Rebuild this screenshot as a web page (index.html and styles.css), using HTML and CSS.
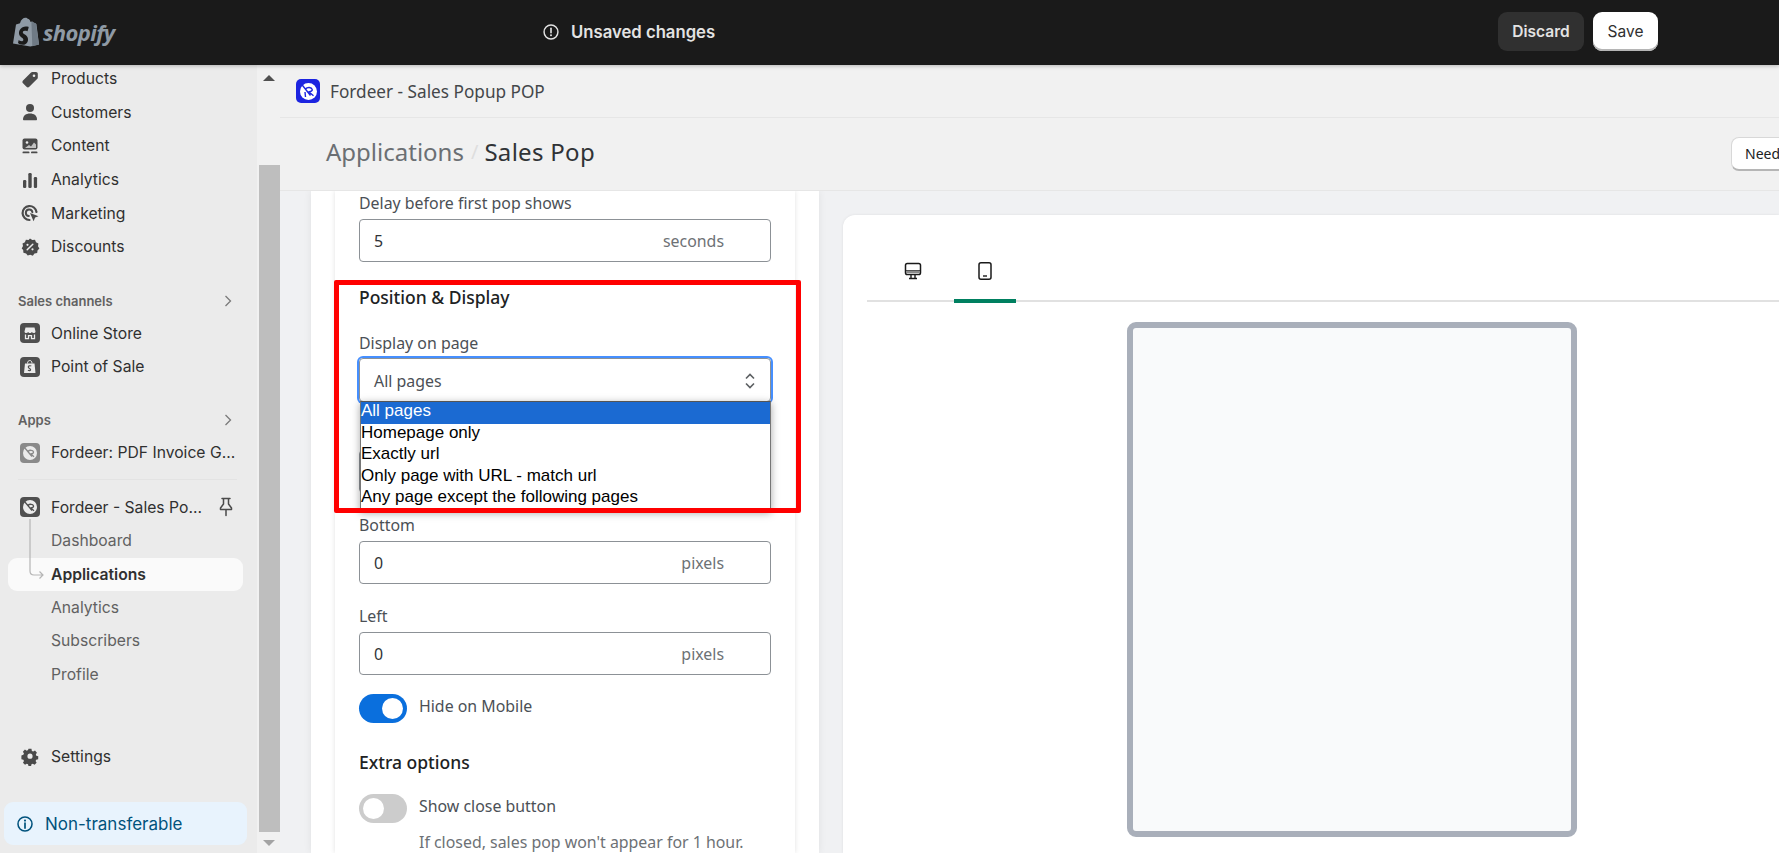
FILE: index.html
```html
<!DOCTYPE html>
<html lang="en">
    <head>
        <meta charset="utf-8">
        <meta name="viewport" content="width=device-width, initial-scale=1.0">
        <title>Fordeer - Sales Popup POP</title>
        <link rel="stylesheet" href="styles.css">
    </head>
    <body>
        <header class="topbar">
            <div class="brand">
                <svg class="brand_bag" viewBox="0 0 26 30" width="26" height="30"><path d="M3 7.500 7 6.200C8 2.800 10 .8 12.600.8c1 0 1.600.4 2 1 1.500 0 2.600 1.300 3 3.300l1.800-.5 1 .9 3 1.400L26 27.500 17.300 29.500 0 26.500z" fill="#8f9aa5"/><path d="M18.400 4.600 19.300 29.200 26 27.600 23 6.500z" fill="#6f7a85"/><path d="M15.600 10.800 14.500 14.200s-1.200-.6-2.600-.5c-2.100.1-2.100 1.400-2.100 1.700.1 1.800 4.900 2.200 5.200 6.500.2 3.300-1.800 5.600-4.700 5.800-3.400.2-5.300-1.800-5.300-1.800l.7-3s1.900 1.400 3.400 1.300c1-.1 1.300-.9 1.300-1.400-.1-2.400-4.100-2.300-4.400-6.200-.2-3.300 2-6.700 6.800-7 1.900-.1 2.800.4 2.800.4z" fill="#1a1a1a"/></svg>
                <span class="brand_name">shopify</span>
            </div>
            <div class="unsaved">
                <svg viewBox="0 0 20 20" width="18" height="18"><circle cx="10" cy="10" r="7.700" fill="none" stroke="#e3e3e3" stroke-width="1.600"/><path d="M10 5.800v5" stroke="#e3e3e3" stroke-width="1.800" stroke-linecap="round"/><circle cx="10" cy="13.700" r="1.100" fill="#e3e3e3"/></svg>
                <span>Unsaved changes</span>
            </div>
            <div class="top_actions">
                <button type="button" class="btn_discard">Discard</button>
                <button type="button" class="btn_save">Save</button>
            </div>
        </header>

        <div class="frame">
            <nav class="sidebar">
                <div class="nav_group">
                    <a class="nav_row"><svg class="ico" viewBox="0 0 20 20"><path d="M3 11.500 10.800 3.700c.4-.4 1-.7 1.600-.7H16c1 0 1.800.8 1.800 1.800v3.600c0 .6-.2 1.200-.7 1.600L9.300 17.800c-.8.8-2 .8-2.800 0L3 14.300c-.8-.8-.8-2 0-2.800z" fill="#4a4a4a"/><circle cx="14" cy="6.800" r="1.300" fill="#ebebeb"/></svg>Products</a>
                    <a class="nav_row"><svg class="ico" viewBox="0 0 20 20"><circle cx="10" cy="6" r="4" fill="#4a4a4a"/><path d="M3 17.500c0-4 3-6 7-6s7 2 7 6c0 .4-.3.7-.7.7H3.700c-.4 0-.7-.3-.7-.7z" fill="#4a4a4a"/></svg>Customers</a>
                    <a class="nav_row"><svg class="ico" viewBox="0 0 20 20"><rect x="2.500" y="2.500" width="15" height="11" rx="2" fill="#4a4a4a"/><circle cx="7" cy="6.500" r="1.300" fill="#ebebeb"/><path d="M5 12l4-3 2 1.500 3-4 2 2v3.500z" fill="#ebebeb" opacity=".75"/><rect x="2.500" y="15.500" width="7" height="1.800" rx=".9" fill="#4a4a4a"/><rect x="11" y="15.500" width="6.500" height="1.800" rx=".9" fill="#4a4a4a"/></svg>Content</a>
                    <a class="nav_row"><svg class="ico" viewBox="0 0 20 20"><rect x="3" y="10" width="3.300" height="8" rx="1.200" fill="#4a4a4a"/><rect x="8.300" y="3" width="3.400" height="15" rx="1.200" fill="#4a4a4a"/><rect x="13.800" y="7" width="3.300" height="11" rx="1.200" fill="#4a4a4a"/></svg>Analytics</a>
                    <a class="nav_row"><svg class="ico" viewBox="0 0 20 20"><path d="M9.500 17a7 7 0 1 1 7-8" fill="none" stroke="#4a4a4a" stroke-width="2.200" stroke-linecap="round"/><path d="M8.800 13a3.300 3.300 0 1 1 3.600-3.800" fill="none" stroke="#4a4a4a" stroke-width="2" stroke-linecap="round"/><path d="M10 10l8.500 3.200-3.400 1.400-1.500 3.700z" fill="#4a4a4a"/></svg>Marketing</a>
                    <a class="nav_row"><svg class="ico" viewBox="0 0 20 20"><path d="M10 1.500l2.300 1.500 2.700-.3 1 2.500 2.400 1.300-.4 2.700 1.400 2.300-1.900 1.900-.3 2.700-2.700.5-1.700 2.100-2.500-1-2.600.9-1.600-2.200-2.700-.6-.2-2.700L1.700 11.500l1.300-2.400-.5-2.700 2.400-1.200 1-2.500 2.700.2z" fill="#4a4a4a"/><path d="M7.200 12.800l5.600-5.600" stroke="#ebebeb" stroke-width="1.500" stroke-linecap="round"/><circle cx="7.500" cy="7.800" r="1.100" fill="#ebebeb"/><circle cx="12.500" cy="12.300" r="1.100" fill="#ebebeb"/></svg>Discounts</a>
                </div>

                <div class="nav_group group_sales">
                    <div class="nav_head"><span>Sales channels</span><svg class="chev" viewBox="0 0 10 14"><path d="M2.500 2 7.500 7l-5 5" fill="none" stroke="#7a7a7a" stroke-width="1.300"/></svg></div>
                    <a class="nav_row"><svg class="ico_app" viewBox="0 0 20 20"><rect width="20" height="20" rx="4" fill="#4f4f4f"/><path d="M4.500 8.500 5.500 4.500h9l1 4c0 1-1 1.600-1.800 1.600s-1.400-.5-1.800-1c-.4.5-1 1-1.900 1s-1.500-.5-1.900-1c-.4.5-1 1-1.800 1S4.500 9.500 4.500 8.500z" fill="#ebebeb"/><path d="M5.500 11.500v4.200h3v-3h3v3h3v-4.200" fill="none" stroke="#ebebeb" stroke-width="1.300"/></svg>Online Store</a>
                    <a class="nav_row"><svg class="ico_app" viewBox="0 0 20 20"><rect width="20" height="20" rx="4" fill="#4f4f4f"/><path d="M5 6.500h9.500l1 9.500H4z" fill="#ebebeb"/><path d="M7.500 6.500c0-2 1-3 2.300-3s2.200 1 2.200 3" fill="none" stroke="#ebebeb" stroke-width="1"/><path d="M11.300 9c-1.800-.7-3 .1-3 1.100 0 1.400 2.300 1.300 2.300 2.600 0 1-1.400 1.200-2.700.5" fill="none" stroke="#4f4f4f" stroke-width="1.200"/></svg>Point of Sale</a>
                </div>

                <div class="nav_group group_apps">
                    <div class="nav_head"><span>Apps</span><svg class="chev" viewBox="0 0 10 14"><path d="M2.500 2 7.500 7l-5 5" fill="none" stroke="#7a7a7a" stroke-width="1.300"/></svg></div>
                    <a class="nav_row"><svg class="ico_app" viewBox="0 0 20 20"><rect width="20" height="20" rx="4" fill="#8a8a8a"/><circle cx="10" cy="10" r="7" fill="#ebebeb"/><path d="M4.500 4.500 12 13.500M8 8.500c1.500-1.800 5-1.600 5.500.4.3 1.300-1.300 2-3 1.900M10.500 10.800l3.500 3" fill="none" stroke="#8a8a8a" stroke-width="1.300"/></svg><span class="row_text">Fordeer: PDF Invoice G...</span></a>
                    <div class="nav_line"></div>
                    <a class="nav_row"><svg class="ico_app" viewBox="0 0 20 20"><rect width="20" height="20" rx="4" fill="#4f4f4f"/><circle cx="10" cy="10" r="7" fill="#ebebeb"/><path d="M4.500 4.500 12 13.500M8 8.500c1.500-1.800 5-1.600 5.500.4.3 1.300-1.300 2-3 1.900M10.500 10.800l3.500 3" fill="none" stroke="#4f4f4f" stroke-width="1.300"/></svg><span class="row_text">Fordeer - Sales Po...</span><svg class="pin" viewBox="0 0 16 20"><path d="M4 1.500h8M5.500 1.500V7L2.500 11v1.500h11V11l-3-4V1.500M8 12.500v6" fill="none" stroke="#4a4a4a" stroke-width="1.500" stroke-linejoin="round" stroke-linecap="round"/></svg></a>
                    <div class="sub_list">
                        <svg class="sub_tree" viewBox="0 0 16 62" width="16" height="62"><path d="M1 0V52c0 3 1.500 4 4 4H14M10.500 52.500 14 56l-3.500 3.500" fill="none" stroke="#b5b5b5" stroke-width="1.200"/></svg>
                        <a class="sub_row">Dashboard</a>
                        <a class="sub_row sub_active">Applications</a>
                        <a class="sub_row">Analytics</a>
                        <a class="sub_row">Subscribers</a>
                        <a class="sub_row">Profile</a>
                    </div>
                </div>

                <div class="side_bottom">
                    <a class="nav_row row_settings"><svg class="ico" viewBox="0 0 20 20"><path fill-rule="evenodd" d="M8.300 1.800h3.400l.5 2.400 1.500.7 2.100-1.200 2.300 2.500-1.300 2 .5 1.600 2.300.7-.1 3.300-2.300.6-.7 1.500 1.200 2.100-2.400 2.400-2.100-1.200-1.500.6-.5 2.300H8.300l-.6-2.300-1.500-.6-2 1.200-2.400-2.400 1.200-2.100-.7-1.500-2.300-.6V9.500l2.300-.7.7-1.600-1.300-2 2.400-2.500 2.100 1.200 1.500-.7zM10 7.300a3 3 0 1 0 0 6 3 3 0 0 0 0-6z" transform="translate(1.400 1.300) scale(.86)" fill="#4a4a4a"/></svg>Settings</a>
                    <div class="plan_box"><svg viewBox="0 0 20 20" width="18" height="18"><circle cx="10" cy="10" r="7.800" fill="none" stroke="#00527c" stroke-width="1.700"/><path d="M10 9v5.500" stroke="#00527c" stroke-width="1.900" stroke-linecap="round"/><circle cx="10" cy="6.200" r="1.200" fill="#00527c"/></svg><span>Non-transferable</span></div>
                </div>
            </nav>

            <div class="scroller">
                <div class="scroll_arrow arrow_up"></div>
                <div class="scroll_gap"></div>
                <div class="scroll_thumb"></div>
                <div class="scroll_arrow arrow_down"></div>
            </div>

            <main class="content">
                <div class="app_bar">
                    <svg class="app_logo" viewBox="0 0 24 24" width="24" height="24"><rect width="24" height="24" rx="5" fill="#1c24e0"/><circle cx="12.500" cy="12.500" r="8.500" fill="#fff"/><path d="M5 4.500 14.500 16.500M9.500 10c1.800-2.200 6-2 6.700.4.400 1.600-1.500 2.500-3.700 2.300M13 13l4.500 3.800M9 13l.5 5" fill="none" stroke="#1c24e0" stroke-width="1.400"/></svg>
                    <span>Fordeer - Sales Popup POP</span>
                </div>
                <div class="title_bar">
                    <span class="crumb">Applications</span>
                    <span class="crumb_sep">/</span>
                    <span class="title">Sales Pop</span>
                    <button type="button" class="btn_need">Need</button>
                </div>

                <div class="panels">
                    <section class="settings_panel">
                        <div class="settings_card">
                            <label class="field_label label_first">Delay before first pop shows</label>
                            <div class="input_box"><span class="input_val">5</span><span class="input_unit">seconds</span></div>

                            <h3 class="sect_head">Position &amp; Display</h3>
                            <label class="field_label label_page">Display on page</label>
                            <div class="select_wrap">
                                <div class="select_box">
                                    <span>All pages</span>
                                    <svg viewBox="0 0 12 18" width="12" height="18"><path d="M2 6.500 6 2.500l4 4M2 11.500l4 4 4-4" fill="none" stroke="#5c5f62" stroke-width="1.600"/></svg>
                                </div>
                                <ul class="select_list">
                                    <li class="opt_on">All pages</li>
                                    <li>Homepage only</li>
                                    <li>Exactly url</li>
                                    <li>Only page with URL - match url</li>
                                    <li>Any page except the following pages</li>
                                </ul>
                            </div>
                            <div class="input_box box_hidden"></div>

                            <label class="field_label label_next">Bottom</label>
                            <div class="input_box"><span class="input_val">0</span><span class="input_unit">pixels</span></div>
                            <label class="field_label label_next">Left</label>
                            <div class="input_box"><span class="input_val">0</span><span class="input_unit">pixels</span></div>

                            <div class="toggle_row row_hide"><span class="toggle toggle_on"></span><span class="toggle_text">Hide on Mobile</span></div>
                            <h3 class="sect_head head_extra">Extra options</h3>
                            <div class="toggle_row row_close"><span class="toggle"></span><span class="toggle_text">Show close button</span></div>
                            <p class="help_text">If closed, sales pop won't appear for 1 hour.</p>
                        </div>
                        <div class="red_box"></div>
                    </section>

                    <section class="preview_card">
                        <div class="tabs">
                            <div class="tab"><svg viewBox="0 0 18 18" width="18" height="18"><rect x="1.500" y="1.500" width="15" height="11" rx="1.800" fill="none" stroke="#1a1a1a" stroke-width="1.500"/><path d="M1.500 9h15" stroke="#1a1a1a" stroke-width="1.500"/><path d="M2 10h14" stroke="#8a8a8a" stroke-width="2"/><path d="M7 12.500v4M11 12.500v4M5 16.500h8" stroke="#1a1a1a" stroke-width="1.400"/></svg></div>
                            <div class="tab tab_on"><svg viewBox="0 0 18 18" width="18" height="18"><rect x="3" y=".8" width="12" height="16.400" rx="2" fill="none" stroke="#1a1a1a" stroke-width="1.500"/><path d="M7 14h4" stroke="#1a1a1a" stroke-width="1.400"/></svg></div>
                        </div>
                        <div class="phone_wrap"><div class="phone"></div></div>
                    </section>
                </div>
            </main>
        </div>
    </body>
</html>
```
FILE: styles.css
```css
*{
    margin: 0;
    padding: 0;
    box-sizing: border-box;
}
html, body{
    height: 100%;
    overflow: hidden;
}
body{
    font: 15.7px Inter, "Liberation Sans", sans-serif;
    color: #303030;
    background: #f0f1f3;
}
/* top bar */
.topbar{
    height: 65px;
    padding-bottom: 2px;
    background: #1a1a1a;
    display: flex;
    align-items: center;
    position: relative;
    box-shadow: 0 1px 4px rgba(0,0,0,.25);
    z-index: 5;
}
.brand{
    width: 542px;
    padding-left: 13px;
    display: flex;
    align-items: center;
    gap: 4px;
}
.brand_name{
    font: italic bold 22px "Open Sans", sans-serif;
    color: #8f9aa5;
    letter-spacing: -.6px;
}
.unsaved{
    width: 956px;
    display: flex;
    align-items: center;
    gap: 11px;
    color: #e3e3e3;
    font-size: 16.7px;
    font-weight: 600;
}
.top_actions{
    display: flex;
    gap: 9px;
}
.top_actions button{
    height: 39px;
    border: 0;
    border-radius: 9px;
    font: 15.5px Inter, sans-serif;
}
.btn_discard{
    width: 86px;
    background: #303030;
    color: #e3e3e3;
    font-weight: 600 !important;
}
.btn_save{
    width: 65px;
    background: #fff;
    color: #303030;
    box-shadow: inset 0 -2px 0 #b5b5b5;
}
/* sidebar */
.frame{
    display: flex;
    height: 788px;
}
.sidebar{
    width: 257px;
    background: #ebebeb;
    display: flex;
    flex-direction: column;
    flex: none;
}
.nav_row{
    height: 33.6px;
    padding-left: 20px;
    display: flex;
    align-items: center;
    gap: 11px;
    color: #303030;
    white-space: nowrap;
}
.nav_group:first-child{
    margin-top: -3px;
}
.ico, .ico_app{
    width: 20px;
    height: 20px;
    flex: none;
}
.row_text{
    flex: none;
}
.pin{
    width: 16px;
    height: 20px;
    margin-left: auto;
    margin-right: 23px;
}
.nav_head{
    height: 30px;
    padding: 0 24px 2px 18px;
    display: flex;
    align-items: center;
    justify-content: space-between;
    font-size: 13px;
    font-weight: 600;
    color: #616161;
}
.chev{
    width: 10px;
    height: 14px;
}
.group_sales{
    margin-top: 23px;
}
.group_apps{
    margin-top: 22px;
}
.nav_line{
    height: 1px;
    background: #e3e3e3;
    margin: 10px 20px 10px 18px;
}
.sub_list{
    position: relative;
}
.sub_tree{
    position: absolute;
    left: 28.5px;
    top: -5px;
    z-index: 1;
}
.sub_row{
    display: flex;
    align-items: center;
    height: 33.6px;
    padding-left: 51px;
    color: #616161;
}
.sub_active{
    margin: 0 14px 0 8px;
    padding-left: 43px;
    height: 33px;
    background: #fafafa;
    border-radius: 9px;
    color: #303030;
    font-weight: 600;
}
.side_bottom{
    margin-top: auto;
    padding-bottom: 8px;
}
.row_settings{
    margin-bottom: 29px;
}
.plan_box{
    margin: 0 10px 0 4px;
    height: 43px;
    border-radius: 9px;
    background: #e8f3fd;
    color: #00527c;
    display: flex;
    align-items: center;
    padding-left: 12px;
    gap: 11px;
    font-size: 17px;
}
/* scrollbar */
.scroller{
    width: 23px;
    flex: none;
    background: #f1f1f1;
    padding-left: 2px;
    display: flex;
    flex-direction: column;
}
.scroll_arrow{
    width: 0;
    height: 0;
    flex: none;
    border-left: 6px solid transparent;
    border-right: 6px solid transparent;
    margin: 0 0 0 4px;
}
.arrow_up{
    border-bottom: 6px solid #505050;
    margin-top: 10px;
}
.scroll_gap{
    height: 84px;
    flex: none;
}
.scroll_thumb{
    flex: 1;
    background: #bebebe;
}
.arrow_down{
    border-top: 6px solid #a3a3a3;
    margin-top: 8px;
    margin-bottom: 7px;
}
/* main header */
.content{
    flex: 1;
    min-width: 0;
    overflow: hidden;
    display: flex;
    flex-direction: column;
}
.app_bar{
    height: 53px;
    flex: none;
    display: flex;
    align-items: center;
    gap: 10px;
    padding-left: 16px;
    background: #f1f1f1;
    border-bottom: 1px solid #e6e6e6;
    font: 17.2px "Noto Sans", sans-serif;
    color: #44474a;
    position: relative;
    z-index: 2;
}
.app_logo{
    flex: none;
}
.title_bar{
    height: 73px;
    flex: none;
    display: flex;
    align-items: center;
    padding-left: 46px;
    background: #f1f1f1;
    border-bottom: 1px solid #e6e6e6;
    font: 24px "Noto Sans", sans-serif;
    position: relative;
    z-index: 2;
}
.crumb{
    color: #6b6f73;
    margin-bottom: 5px;
}
.crumb_sep{
    color: #dedede;
    margin: 0 6px 5px 7px;
    font-size: 20px;
}
.title{
    color: #303336;
    margin-bottom: 5px;
    letter-spacing: .3px;
}
.btn_need{
    margin-left: auto;
    width: 90px;
    margin-right: -42px;
    height: 34px;
    background: #fff;
    border: 1px solid #d8d8d8;
    border-bottom: 2px solid #b5b5b5;
    border-radius: 8px;
    font: 14px "Noto Sans", sans-serif;
    color: #202223;
    text-align: left;
    padding-left: 13px;
}
/* panels */
.panels{
    flex: 1;
    display: flex;
    min-height: 0;
    padding-left: 31px;
}
.settings_panel{
    width: 508px;
    flex: none;
    background: #fff;
    box-shadow: 0 0 8px rgba(0,0,0,.07);
    padding-left: 24px;
    position: relative;
}
.settings_card{
    width: 460px;
    height: 100%;
    background: #fff;
    box-shadow: 0 0 5px rgba(0,0,0,.12);
    padding: 0 24px;
    overflow: hidden;
    font: 15.9px/24px "Noto Sans", sans-serif;
    color: #4b5056;
}
.field_label{
    display: block;
    height: 24px;
    line-height: 24px;
    margin-bottom: 4px;
}
.input_box{
    height: 43px;
    border: 1px solid #8c9196;
    border-radius: 4px;
    display: flex;
    align-items: center;
    padding: 0 46px 0 14px;
    justify-content: space-between;
}
.input_val{
    color: #303336;
}
.input_unit{
    color: #6d7175;
}
.sect_head{
    font-size: 17.5px;
    font-weight: 500;
    color: #202223;
    line-height: 24px;
    margin-top: 23px;
}
.label_page{
    margin-top: 22px;
}
.select_wrap{
    position: relative;
    margin-top: -1px;
    height: 44px;
}
.select_box{
    height: 44px;
    padding: 1px 14px 0;
    border: 1px solid #8c9196;
    border-radius: 4px;
    box-shadow: 0 0 0 2px #458fff;
    display: flex;
    align-items: center;
    justify-content: space-between;
}
.select_list{
    position: absolute;
    left: 1px;
    right: 0;
    top: 43px;
    height: 110px;
    list-style: none;
    background: #fff;
    border: 1px solid #767676;
    border-top-color: #555;
    border-bottom: 0;
    box-shadow: 0 2px 8px rgba(0,0,0,.35);
    font: 17px "Liberation Sans", Arial, sans-serif;
    color: #000;
    z-index: 2;
}
.select_list li{
    height: 21.5px;
    line-height: 18px;
    white-space: nowrap;
}
.opt_on{
    background: #1b6ad2;
    color: #fff;
}
.box_hidden{
    margin-top: 48px;
}
.label_next{
    margin-top: 20px;
}
.toggle_row{
    display: flex;
    align-items: center;
    gap: 12px;
}
.toggle_text{
    margin-bottom: 5px;
}
.row_hide{
    margin-top: 19px;
}
.row_close{
    margin-top: 20px;
}
.toggle{
    width: 48px;
    height: 29px;
    border-radius: 15px;
    background: #ccc;
    position: relative;
    flex: none;
}
.toggle::after{
    content: "";
    position: absolute;
    top: 4px;
    left: 4px;
    width: 21px;
    height: 21px;
    border-radius: 50%;
    background: #fff;
}
.toggle_on{
    background: #0a6fdd;
}
.toggle_on::after{
    left: 23px;
}
.head_extra{
    margin-top: 27px;
}
.help_text{
    margin: 7px 0 0 60px;
    color: #6d7175;
    white-space: nowrap;
}
.red_box{
    position: absolute;
    left: 23px;
    top: 89px;
    width: 467px;
    height: 233px;
    border: 5px solid #f00;
    border-radius: 2px;
    z-index: 3;
}
/* preview */
.preview_card{
    flex: 1;
    min-width: 0;
    margin: 24px 0 0 24px;
    background: #fff;
    border-radius: 12px 0 0 0;
    box-shadow: 0 0 3px rgba(0,0,0,.08);
    padding: 24px 0 0 24px;
    display: flex;
    flex-direction: column;
}
.tabs{
    height: 63px;
    flex: none;
    display: flex;
    border-bottom: 2px solid #e1e1e1;
    padding-left: 15px;
    gap: 10px;
}
.tab{
    width: 62px;
    height: 64px;
    display: flex;
    align-items: center;
    justify-content: center;
    flex: none;
}
.tab_on{
    border-bottom: 4px solid #008060;
    border-radius: 3px 3px 0 0;
    padding-top: 4px;
}
.phone_wrap{
    padding: 20px 0 0 260px;
}
.phone{
    width: 450px;
    height: 515px;
    background: #f9fafb;
    border: 6px solid #a9afba;
    border-radius: 9px;
}
```
